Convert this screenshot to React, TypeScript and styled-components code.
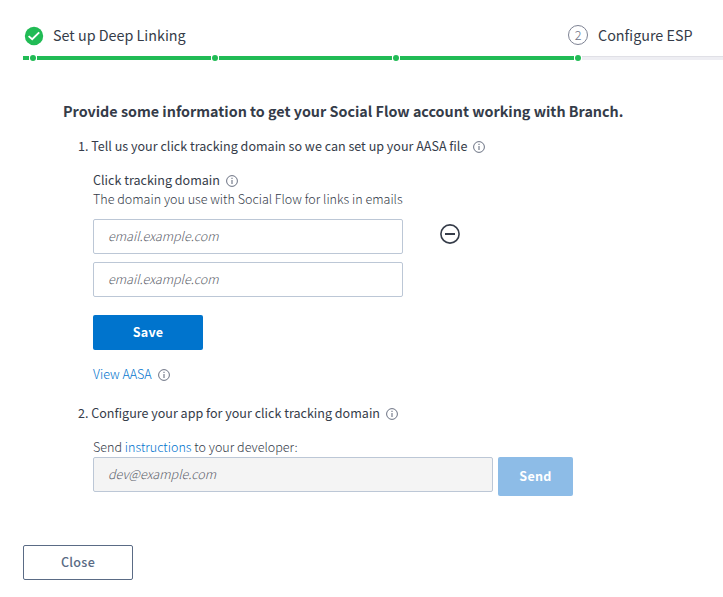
import React from "react";
import styled, { createGlobalStyle } from "styled-components";

const GlobalStyle = createGlobalStyle`
  * { box-sizing: border-box; }
  body {
    margin: 0;
    background: #fff;
    color: #353c49;
    font-family: "Noto Sans CJK SC", "Noto Sans", sans-serif;
    font-size: 12.56px;
    line-height: 20px;
    overflow: hidden;
  }
`;

const Page = styled.main`
  display: flex;
  flex-direction: column;
  height: 597px;
  padding: 23px 0 0 23px;
`;

const Steps = styled.header`
  display: flex;
  height: 33px;
`;

const Step = styled.div<{ $width?: number }>`
  display: flex;
  align-items: center;
  height: 24px;
  width: ${(p) => (p.$width ? `${p.$width}px` : "auto")};
  font-size: 14.34px;
  white-space: nowrap;
  flex-shrink: 0;
`;

const StepMark = styled.svg`
  display: block;
  width: 20px;
  height: 20px;
  margin-right: 10px;
  overflow: visible;
`;

const StepNumber = styled.span`
  display: flex;
  align-items: center;
  justify-content: center;
  width: 20px;
  height: 20px;
  margin: 0 10px 0 0;
  border: 1px solid #7d8293;
  border-radius: 50%;
  font-size: 12.56px;
  font-weight: 300;
  line-height: 18px;
  color: #6b7083;
`;

const Track = styled.div`
  display: flex;
  align-items: center;
  height: 4px;
`;

const Segment = styled.span<{ $width?: number; $pending?: boolean }>`
  height: 4px;
  flex: ${(p) => (p.$width ? `0 0 ${p.$width}px` : "1")};
  background: ${(p) => (p.$pending ? "#eeeef3" : "#21bb55")};
  border-top: ${(p) => (p.$pending ? "1px solid #e0e0e6" : "0")};
`;

const Dot = styled.span`
  flex: 0 0 6px;
  height: 6px;
  margin: 0 1px;
  border-radius: 50%;
  background: #21bb55;
`;

const Content = styled.section`
  display: flex;
  flex-direction: column;
  padding: 41px 0 0 40px;
  height: 485px;
`;

const Title = styled.h1`
  margin: 0;
  font-size: 14.33px;
  font-weight: 700;
  line-height: 20px;
  white-space: nowrap;
`;

const Row = styled.div<{ $top?: number; $indent?: number }>`
  display: flex;
  align-items: center;
  height: 20px;
  margin-top: ${(p) => p.$top ?? 0}px;
  padding-left: ${(p) => p.$indent ?? 0}px;
  white-space: pre;
  flex-shrink: 0;
`;

const Form = styled.div`
  display: flex;
  flex-direction: column;
  padding-left: 30px;
`;

const Hint = styled.p`
  margin: 0;
  font-weight: 300;
  line-height: 18px;
  white-space: pre;
`;

const Link = styled.a`
  color: #0074cd;
  font-weight: 300;
  text-decoration: none;
`;

const InfoSvg = styled.svg`
  display: block;
  width: 12px;
  height: 12px;
  margin: 1px 0 0 6px;
`;

const Field = styled.div<{ $top: number }>`
  display: flex;
  align-items: center;
  margin-top: ${(p) => p.$top}px;
`;

const Input = styled.input<{ $width: number }>`
  width: ${(p) => p.$width}px;
  height: 35px;
  padding: 0 14px 3px;
  border: 1px solid #bcc7d6;
  border-radius: 2px;
  background: #fff;
  font: 300 12.56px "Noto Sans CJK SC", sans-serif;
  color: #353c49;
  &:disabled { background: #f4f4f4; }
  &::placeholder {
    color: #5c616b;
    font-style: italic;
    opacity: 1;
  }
`;

const RemoveButton = styled.button`
  display: flex;
  width: 20px;
  height: 20px;
  margin: -5px 0 0 37px;
  padding: 0;
  border: 0;
  background: none;
`;

const Button = styled.button<{ $kind?: "primary" | "muted" | "outline" }>`
  width: ${(p) => (p.$kind === "muted" ? 75 : 110)}px;
  height: ${(p) => (p.$kind === "muted" ? 39 : 35)}px;
  flex-shrink: 0;
  padding: 0 0 2px;
  border: ${(p) => (p.$kind === "outline" ? "1px solid #5a6b85" : "0")};
  border-radius: 2px;
  background: ${(p) => (p.$kind === "outline" ? "#fff" : p.$kind === "muted" ? "#8dbce7" : "#0074cd")};
  color: ${(p) => (p.$kind === "outline" ? "#5a6b85" : "#fff")};
  font: ${(p) => (p.$kind === "outline" ? 500 : 700)} 12.56px/20px "Noto Sans CJK SC", sans-serif;
  letter-spacing: ${(p) => (p.$kind === "primary" ? 0.2 : 0.3)}px;
`;

const SendRow = styled.div`
  display: flex;
  align-items: flex-start;
  gap: 5px;
`;

const InfoIcon = () => (
  <InfoSvg viewBox="0 0 12 12" fill="none" aria-hidden="true">
    <circle cx="6" cy="6" r="5.4" stroke="#6a7182" />
    <path d="M6 5V9" stroke="#6a7182" strokeWidth="1.1" />
    <path d="M6 2.8V4" stroke="#6a7182" strokeWidth="1.1" />
  </InfoSvg>
);

export default function App() {
  return (
    <Page>
      <GlobalStyle />
      <Steps>
        <Step $width={545}>
          <StepMark viewBox="0 0 20 20" aria-hidden="true">
            <circle cx="11" cy="11" r="9.2" fill="#21bb55" />
            <path d="M5.6 11.1L9.2 14.2L16.2 7.4" fill="none" stroke="#fff" strokeWidth="1.9" />
          </StepMark>
          Set up Deep Linking
        </Step>
        <Step>
          <StepNumber>2</StepNumber>
          Configure ESP
        </Step>
      </Steps>
      <Track>
        <Segment $width={6} />
        <Dot />
        <Segment $width={174} />
        <Dot />
        <Segment $width={173} />
        <Dot />
        <Segment $width={174} />
        <Dot />
        <Segment $pending />
      </Track>
      <Content>
        <Title>Provide some information to get your Social Flow account working with Branch.</Title>
        <Row $top={15} $indent={15}>
          1. Tell us your click tracking domain so we can set up your AASA file
          <InfoIcon />
        </Row>
        <Form>
          <Row $top={14}>
            Click tracking domain
            <InfoIcon />
          </Row>
          <Hint>The domain you use with Social Flow for links in emails</Hint>
          <Field $top={11}>
            <Input $width={310} placeholder="email.example.com" />
            <RemoveButton aria-label="Remove domain">
              <svg width="20" height="20" viewBox="0 0 20 20" fill="none">
                <circle cx="10" cy="10" r="9.1" stroke="#353c49" strokeWidth="1.6" />
                <path d="M5 10H15" stroke="#353c49" strokeWidth="2" />
              </svg>
            </RemoveButton>
          </Field>
          <Field $top={8}>
            <Input $width={310} placeholder="email.example.com" />
          </Field>
          <Field $top={18}>
            <Button $kind="primary">Save</Button>
          </Field>
          <Row $top={14}>
            <Link>View AASA</Link>
            <InfoIcon />
          </Row>
        </Form>
        <Row $top={19} $indent={15}>
          2. Configure your app for your click tracking domain
          <InfoIcon />
        </Row>
        <Form>
          <Row $top={14}>
            <Hint>
              Send <Link>instructions</Link> to your developer:
            </Hint>
          </Row>
          <SendRow>
            <Input $width={400} placeholder="dev@example.com" disabled />
            <Button $kind="muted">Send</Button>
          </SendRow>
        </Form>
      </Content>
      <Button $kind="outline">Close</Button>
    </Page>
  );
}
